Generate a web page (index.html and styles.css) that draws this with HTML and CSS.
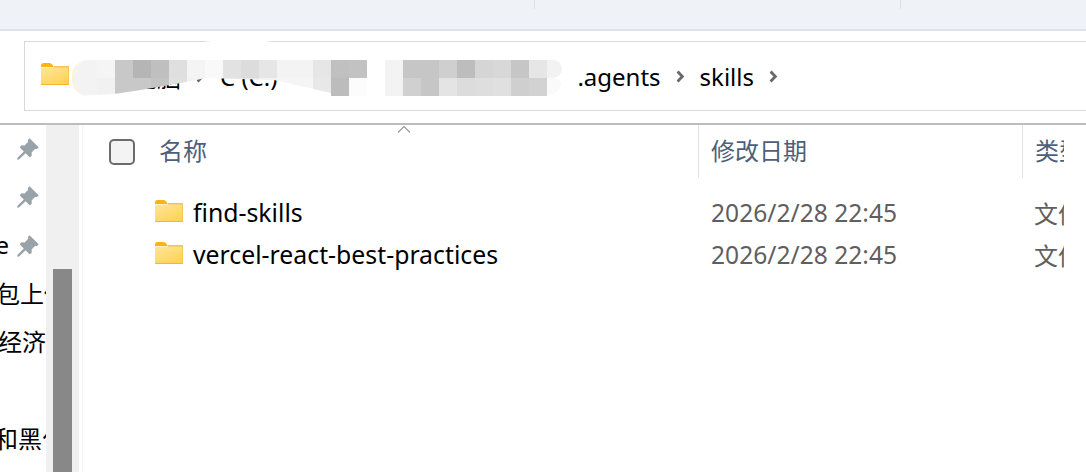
FILE: index.html
```html
<!DOCTYPE html>
<html lang="zh-CN">
<head>
    <meta charset="UTF-8">
    <title>skills</title>
    <link rel="stylesheet" href="styles.css">
</head>
<body>
    <div class="topbar">
        <span class="topbar-tick tick-first"></span>
        <span class="topbar-tick tick-second"></span>
    </div>

    <div class="address-area">
        <div class="address-box">
            <svg class="folder folder-address" viewBox="0 0 28 22"><use href="#folder-icon"/></svg>
            <span class="crumb crumb-root">此电脑</span>
            <svg class="chevron" viewBox="0 0 8 12"><use href="#chevron-icon"/></svg>
            <span class="crumb">C (C:)</span>
            <span class="crumb-gap"></span>
            <span class="crumb">.agents</span>
            <svg class="chevron" viewBox="0 0 8 12"><use href="#chevron-icon"/></svg>
            <span class="crumb">skills</span>
            <svg class="chevron" viewBox="0 0 8 12"><use href="#chevron-icon"/></svg>

            <!-- blurred part of the path -->
            <div class="mosaic">
                <div class="mosaic-row">
                    <i class="t-w23 c-f3"></i><i class="c-f5"></i><i class="c-c8"></i><i class="c-b5"></i><i class="c-bf"></i><i class="c-df"></i><i class="c-f4"></i><i class="c-f9"></i><i class="c-e2"></i><i class="c-dc"></i><i class="c-e6"></i><i class="c-f3"></i><i class="c-f3"></i><i class="c-e6"></i><i class="c-c0"></i><i class="c-c2"></i><i class="c-ff"></i><i class="c-f3"></i><i class="c-c6"></i><i class="c-c6"></i><i class="c-cf"></i><i class="c-bd"></i><i class="c-d5"></i><i class="c-d8"></i><i class="c-c6"></i><i class="c-e6"></i><i class="t-end c-f2"></i>
                </div>
                <div class="mosaic-row mosaic-swoosh">
                    <i class="t-w23 c-f3"></i><i class="c-f1"></i><i class="c-c8"></i><i class="c-c8"></i><i class="c-c4"></i><i class="c-e0"></i><i class="c-f2"></i><i class="c-f9"></i><i class="c-e6"></i><i class="c-e6"></i><i class="c-f2"></i><i class="c-f5"></i><i class="c-f5"></i><i class="c-e8"></i><i class="c-bc"></i><i class="c-fc"></i><i class="c-ff"></i><i class="c-f3"></i><i class="c-d0"></i><i class="c-c6"></i><i class="c-e4"></i><i class="c-dc"></i><i class="c-de"></i><i class="c-e0"></i><i class="c-cf"></i><i class="c-d2"></i><i class="t-end c-fa"></i>
                </div>
            </div>
            <div class="smear"></div>
        </div>
    </div>

    <div class="main">
        <div class="nav">
            <div class="nav-row">
                <svg class="pin" viewBox="0 0 22 22"><use href="#pin-icon"/></svg>
            </div>
            <div class="nav-row">
                <svg class="pin" viewBox="0 0 22 22"><use href="#pin-icon"/></svg>
            </div>
            <div class="nav-row">
                <span class="nav-label">e</span>
                <svg class="pin" viewBox="0 0 22 22"><use href="#pin-icon"/></svg>
            </div>
            <div class="nav-row"><span class="nav-label nav-cut">包上传</span></div>
            <div class="nav-row"><span class="nav-label nav-fit">经济</span></div>
            <div class="nav-row"></div>
            <div class="nav-row"><span class="nav-label nav-cut-more">和黑化</span></div>
        </div>

        <div class="scrollbar">
            <div class="scroll-thumb"></div>
        </div>

        <div class="files">
            <svg class="sort-arrow" viewBox="0 0 14 8"><path d="M1 7.500 7 1.500l6 6" fill="none" stroke="#9a9a9a" stroke-width="1.200"/></svg>
            <div class="file-head">
                <div class="col col-name">
                    <span class="checkbox"></span>
                    <span>名称</span>
                </div>
                <div class="col col-date">修改日期</div>
                <div class="col col-type">类型</div>
            </div>

            <div class="file-row">
                <div class="col col-name">
                    <svg class="folder" viewBox="0 0 28 22"><use href="#folder-icon"/></svg>
                    <span>find-skills</span>
                </div>
                <div class="col col-date">2026/2/28 22:45</div>
                <div class="col col-type">文件夹</div>
            </div>
            <div class="file-row">
                <div class="col col-name">
                    <svg class="folder" viewBox="0 0 28 22"><use href="#folder-icon"/></svg>
                    <span>vercel-react-best-practices</span>
                </div>
                <div class="col col-date">2026/2/28 22:45</div>
                <div class="col col-type">文件夹</div>
            </div>
        </div>
    </div>

    <svg class="icon-defs" width="0" height="0">
        <defs>
            <linearGradient id="folder-fill" x1="0" y1="0" x2="0.6" y2="1">
                <stop offset="0" stop-color="#ffe79f"/>
                <stop offset="1" stop-color="#ffd35a"/>
            </linearGradient>
            <symbol id="folder-icon" viewBox="0 0 28 22">
                <path d="M0 2.500a2.500 2.500 0 0 1 2.500-2.500h6c1.500 0 2.500 1 3.500 2.500l.5 1.500H0z" fill="#fcb315"/>
                <path d="M0 4.500h11.500L13 3h14a1 1 0 0 1 1 1v17a1 1 0 0 1-1 1H1a1 1 0 0 1-1-1z" fill="url(#folder-fill)"/>
                <path d="M13 3h14a1 1 0 0 1 1 1v.6H13z" fill="#f6c250"/>
                <path d="M0 21h28v.3a.7.7 0 0 1-.7.7H.7a.7.7 0 0 1-.7-.7z" fill="#f5b536"/>
                <path d="M27.200 4H28v17h-.8z" fill="#f7c34e"/>
            </symbol>
            <symbol id="chevron-icon" viewBox="0 0 8 12">
                <path d="M1.300 1.400 5.700 6l-4.400 4.600" fill="none" stroke="#686868" stroke-width="2.600"/>
            </symbol>
            <symbol id="pin-icon" viewBox="0 0 22 22">
                <path d="M12.500.3 21.700 9.300l-1.900 1.900-1.600-.4-3.600 3.600.2 3-2 2-4.200-4.200L2 21.600l-1.600.2-.1-1.800 6.500-6.600-4.200-4.200 2-2 3 .2 3.600-3.600-.4-1.800z" fill="#98a2a9"/>
            </symbol>
        </defs>
    </svg>
</body>
</html>
```

FILE: styles.css
```css
* {
    box-sizing: border-box;
}

html, body {
    margin: 0;
    padding: 0;
    height: 100%;
    overflow: hidden;
}

body {
    display: flex;
    flex-direction: column;
    background-color: #ffffff;
    color: #000000;
    font-family: "Noto Sans", "Noto Sans CJK SC", sans-serif;
    font-size: 24px;
}

.topbar {
    flex: none;
    height: 31px;
    background-color: #eff3f8;
    border-bottom: 2px solid #dde3e8;
    display: flex;
    padding-left: 534px;
}

.topbar-tick {
    width: 1px;
    height: 9px;
    background-color: #dfe3e8;
}

.tick-second {
    margin-left: 365px;
}

.address-area {
    flex: none;
    height: 94px;
    padding: 10px 0 0 24px;
    border-bottom: 2px solid #bdbdbd;
}

.address-box {
    position: relative;
    height: 70px;
    margin-right: -2px;
    border: 1px solid #d9d9d9;
    display: flex;
    align-items: center;
    padding-left: 16px;
    font-size: 24px;
}

.crumb {
    flex: none;
    white-space: nowrap;
}

.crumb-root {
    margin-left: 40px;
}

.crumb-gap {
    flex: none;
    width: 300px;
}

.chevron {
    flex: none;
    width: 9px;
    height: 13px;
    margin: 0 15px 0 15px;
}

.mosaic {
    position: absolute;
    left: 49px;
    top: 18px;
    border-radius: 16px 0 16px 16px;
    box-shadow: -2px 0 0 #fdf1d8;
    overflow: hidden;
}

.mosaic-row {
    display: flex;
    height: 18px;
}

.mosaic-swoosh {
    clip-path: polygon(0 0, 100% 0, 100% 100%, 257px 100%, 257px 15px, 200px 2px, 132px 0, 107px 5px, 67px 12px, 40px 16px, 0 100%);
}

.mosaic-row i {
    flex: none;
    display: block;
    width: 18px;
    height: 18px;
}

.mosaic-row .t-w23 {
    width: 23px;
}

.mosaic-row .t-end {
    width: 15px;
    border-radius: 0 14px 14px 0;
}

.smear {
    position: absolute;
    left: 166px;
    top: -2px;
    width: 94px;
    height: 12px;
    background-color: #ffffff;
    border-radius: 50% 50% 0 0;
}

.c-ff { background-color: #ffffff; }
.c-fc { background-color: #fcfcfc; }
.c-fa { background-color: #fafafa; }
.c-f9 { background-color: #f9f9f9; }
.c-f5 { background-color: #f5f5f5; }
.c-f4 { background-color: #f4f4f4; }
.c-f3 { background-color: #f3f3f3; }
.c-f2 { background-color: #f2f2f2; }
.c-f1 { background-color: #f1f1f1; }
.c-e8 { background-color: #e8e8e8; }
.c-e6 { background-color: #e6e6e6; }
.c-e4 { background-color: #e4e4e4; }
.c-e2 { background-color: #e2e2e2; }
.c-e0 { background-color: #e0e0e0; }
.c-df { background-color: #dfdfdf; }
.c-de { background-color: #dedede; }
.c-dc { background-color: #dcdcdc; }
.c-d8 { background-color: #d8d8d8; }
.c-d5 { background-color: #d5d5d5; }
.c-d2 { background-color: #d2d2d2; }
.c-d0 { background-color: #d0d0d0; }
.c-cf { background-color: #cfcfcf; }
.c-c8 { background-color: #c8c8c8; }
.c-c6 { background-color: #c6c6c6; }
.c-c4 { background-color: #c4c4c4; }
.c-c2 { background-color: #c2c2c2; }
.c-c0 { background-color: #c0c0c0; }
.c-bf { background-color: #bfbfbf; }
.c-bd { background-color: #bdbdbd; }
.c-bc { background-color: #bcbcbc; }
.c-b5 { background-color: #b5b5b5; }

.main {
    flex: 1;
    display: flex;
    min-height: 0;
}

.nav {
    flex: none;
    width: 46px;
    overflow: hidden;
}

.nav-row {
    height: 48.300px;
    display: flex;
    align-items: center;
    justify-content: flex-end;
    position: relative;
}

.pin {
    flex: none;
    width: 22px;
    height: 22px;
    margin: 0 7px 0 8px;
}

.nav-label {
    flex: none;
    white-space: nowrap;
    margin-bottom: 3px;
}

.nav-cut {
    margin-right: -22px;
}

.nav-cut-more {
    margin-right: -20px;
}

.scrollbar {
    flex: none;
    width: 33px;
    padding: 144px 7px 0;
    background-color: #f0f0f0;
    margin-right: 3px;
}

.scroll-thumb {
    height: 100%;
    background-color: #888888;
}

.files {
    flex: 1;
    position: relative;
    border-left: 1px solid #f6f6f6;
    min-width: 0;
    overflow: hidden;
}

.sort-arrow {
    position: absolute;
    left: 314px;
    top: 0;
    width: 14px;
    height: 8px;
}

.file-head, .file-row {
    display: grid;
    grid-template-columns: 615px 324px 42px;
}

.file-head {
    height: 53px;
    margin-bottom: 14px;
    color: #4c607a;
}

.file-head .col {
    padding-bottom: 4px;
}

.file-row {
    height: 42px;
    font-size: 24.600px;
}

.col {
    display: flex;
    align-items: center;
    white-space: nowrap;
    overflow: hidden;
}

.file-head .col-date, .file-head .col-type {
    border-left: 1px solid #e2e2e2;
}

.col-date, .col-type {
    padding-left: 12px;
}

.file-row .col-date {
    padding-left: 13px;
}

.file-row .col-date, .file-row .col-type {
    color: #5f5f5f;
    padding-bottom: 2px;
}

.file-row .col-type {
    font-size: 24px;
}

.file-head .col-name {
    padding-left: 26px;
}

.file-row .col-name {
    padding-left: 72px;
    padding-bottom: 2px;
    font-size: 24.800px;
}

.checkbox {
    flex: none;
    width: 26px;
    height: 26px;
    margin: 4px 24px 0 0;
    background-color: #f3f3f3;
    border: 2px solid #6b6b6b;
    border-radius: 5px;
}

.folder {
    flex: none;
    width: 28px;
    height: 22px;
    margin: 0 10px 2px 0;
}

.folder-address {
    margin: 0 0 4px;
}

.icon-defs {
    position: absolute;
}
```
